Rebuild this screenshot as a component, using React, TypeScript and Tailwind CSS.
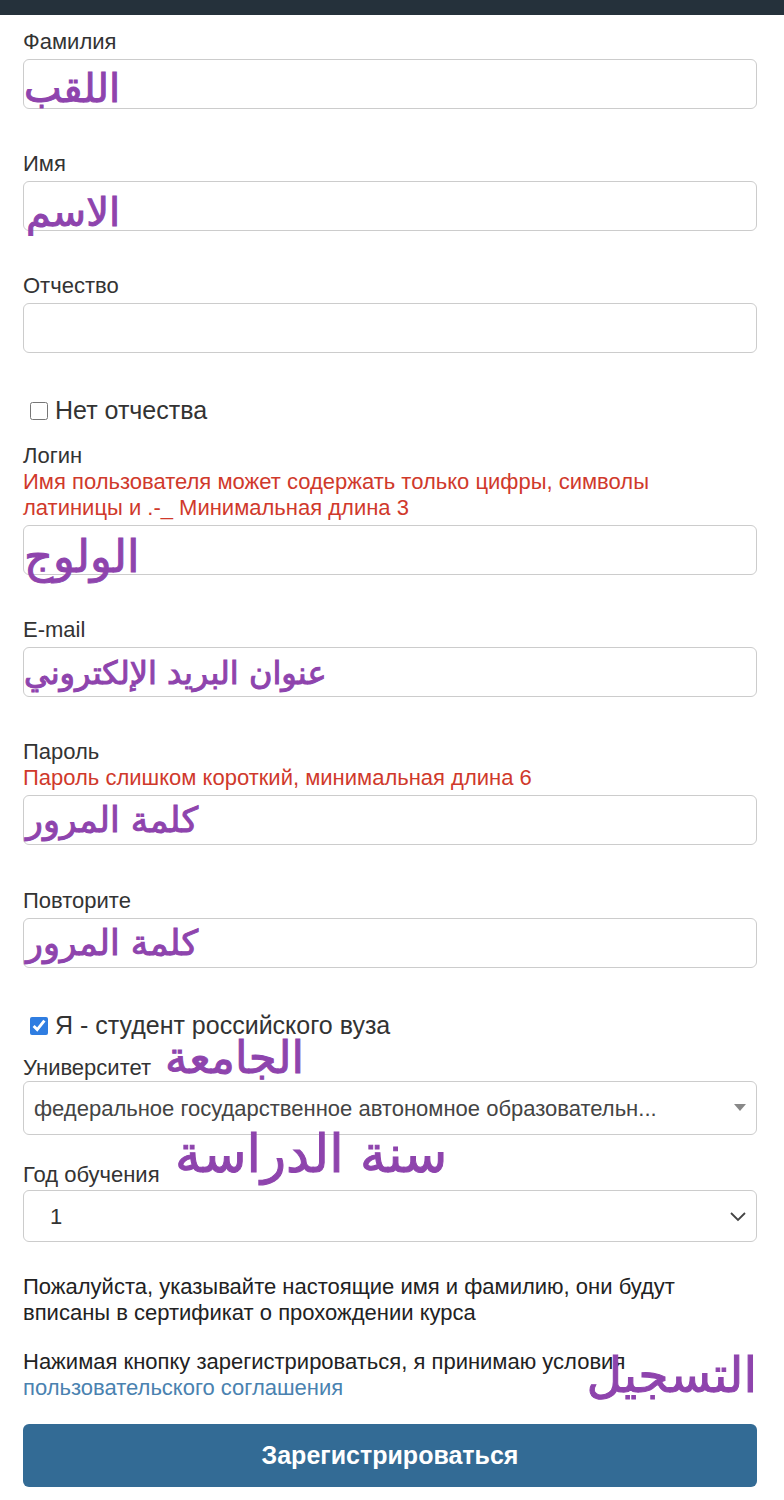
import React from "react";

const ar =
  "font-['DejaVu_Sans',sans-serif] text-[#8e44ad] leading-none whitespace-nowrap [-webkit-text-stroke:1px_#8e44ad]";

function Field({
  label,
  error,
  note,
  noteClass,
  gap = "mt-[42px]",
}: {
  label: string;
  error?: string;
  note?: string;
  noteClass?: string;
  gap?: string;
}) {
  return (
    <div className={`${gap} flex flex-col`}>
      <label className="text-[22px] leading-[26px] text-[#333]">{label}</label>
      {error && <p className="pr-[12px] text-[22px] leading-[26px] text-[#d0392b]">{error}</p>}
      <div className="mt-[4px] flex h-[50px] items-center rounded-[6px] border border-[#ccc] bg-white">
        {note && <span className={`${ar} ${noteClass ?? ""}`}>{note}</span>}
      </div>
    </div>
  );
}

export default function App() {
  return (
    <div className="min-h-[1500px] bg-white font-['Liberation_Sans',Arial,sans-serif] text-[#333]">
      <div className="h-[15px] bg-[#25313b]" />
      <form className="flex flex-col pl-[23px] pr-[27px] pb-[13px]">
        <Field label="Фамилия" gap="mt-[14px]" note="اللقب" noteClass="text-[40px] translate-y-[4px]" />
        <Field label="Имя" note="الاسم" noteClass="text-[40px] translate-y-[6px] pl-[2px]" />
        <Field label="Отчество" />

        <label className="mt-[43px] flex h-[30px] items-center pl-[7px] text-[25px]">
          <input type="checkbox" className="mr-[7px] h-[18px] w-[18px]" />
          Нет отчества
        </label>

        <Field
          label="Логин"
          gap="mt-[17px]"
          error="Имя пользователя может содержать только цифры, символы латиницы и .-_ Минимальная длина 3"
          note="الولوج"
          noteClass="text-[45px] translate-y-[6px]"
        />
        <Field label="E-mail" note="عنوان البريد الإلكتروني" noteClass="text-[32px] translate-y-[1px]" />
        <Field
          label="Пароль"
          error="Пароль слишком короткий, минимальная длина 6"
          note="كلمة المرور"
          noteClass="text-[35px] pl-[2px]"
        />
        <Field label="Повторите" gap="mt-[43px]" note="كلمة المرور" noteClass="text-[35px] pl-[2px]" />

        <label className="mt-[43px] flex h-[30px] items-center pl-[7px] text-[25px]">
          <input type="checkbox" defaultChecked className="mr-[7px] h-[18px] w-[18px] accent-[#2f7de1]" />
          Я - студент российского вуза
        </label>

        <div className="relative mt-[14px] text-[22px] leading-[26px]">
          Университет
          <span className={`${ar} absolute left-[142px] top-[-20px] text-[45px]`}>الجامعة</span>
        </div>
        <div className="flex h-[54px] items-center justify-between rounded-[6px] border border-[#ccc] bg-white pl-[10px] pr-[10px] text-[22px] text-[#444]">
          <span>федеральное государственное автономное образовательн...</span>
          <svg width="12" height="8" viewBox="0 0 12 8">
            <path d="M0 0h12L6 7z" fill="#888" />
          </svg>
        </div>

        <div className="relative mt-[27px] text-[22px] leading-[26px]">
          Год обучения
          <span className={`${ar} absolute left-[152px] top-[-34px] text-[52px]`}>سنة الدراسة</span>
        </div>
        <div className="mt-[2px] flex h-[52px] items-center justify-between rounded-[6px] border border-[#ccc] bg-white pl-[26px] pr-[8px] text-[22px] text-[#333]">
          <span>1</span>
          <svg width="20" height="20" viewBox="0 0 20 20" fill="none" stroke="#444" strokeWidth="1.8">
            <path d="M3 7l7 7 7-7" />
          </svg>
        </div>

        <p className="mt-[32px] text-[22px] leading-[26px] text-[#222]">
          Пожалуйста, указывайте настоящие имя и фамилию, они будут вписаны в сертификат о прохождении курса
        </p>

        <div className="relative mt-[23px] text-[22px] leading-[26px] text-[#222]">
          <p>Нажимая кнопку зарегистрироваться, я принимаю условия</p>
          <a className="text-[#4a82b0]">пользовательского соглашения</a>
          <span className={`${ar} absolute right-0 top-[2px] text-[49px]`}>التسجيل</span>
        </div>

        <button
          type="button"
          className="mt-[23px] h-[63px] rounded-[6px] bg-[#336b95] text-[25px] font-bold text-white"
        >
          Зарегистрироваться
        </button>
      </form>
    </div>
  );
}
